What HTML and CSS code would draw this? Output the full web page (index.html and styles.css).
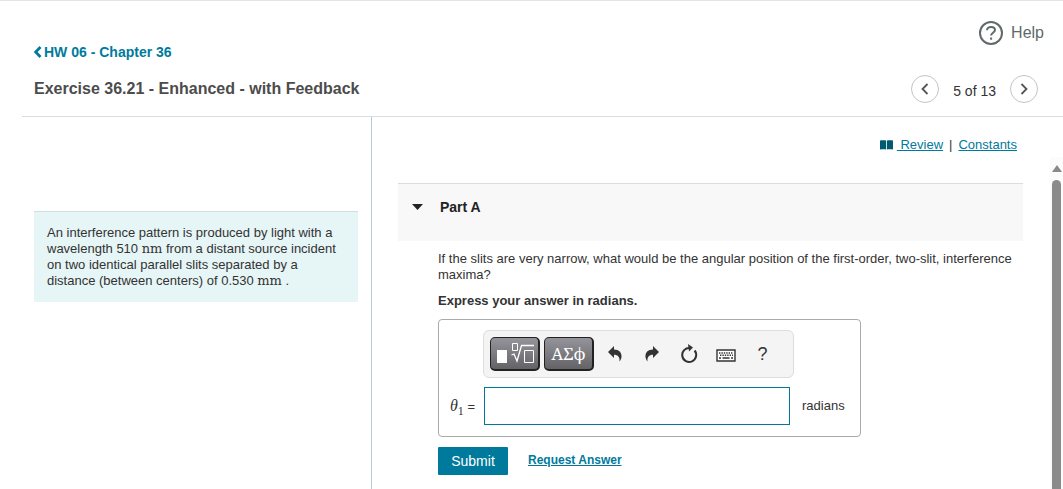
FILE: index.html
```html
<!DOCTYPE html>
<html lang="en">
<head>
    <meta charset="UTF-8">
    <meta name="viewport" content="width=device-width, initial-scale=1.0">
    <title>Exercise 36.21 - Enhanced - with Feedback</title>
    <link rel="stylesheet" href="styles.css">
</head>
<body>
    <header class="header">
        <div class="titles">
            <a class="back" href="#">
                <svg width="8" height="12" viewBox="0 0 8 12"><path d="M6.500 1 1.600 6l4.900 5" fill="none" stroke="currentColor" stroke-width="2.800"/></svg>HW 06 - Chapter 36
            </a>
            <h1>Exercise 36.21 - Enhanced - with Feedback</h1>
        </div>
        <div class="tools">
            <a class="help" href="#">
                <svg width="24" height="24" viewBox="0 0 24 24" fill="none" stroke="currentColor"><circle cx="12" cy="12" r="11" stroke-width="2"/><path d="M8 9.300C8 7.100 9.700 5.900 12 5.900s4 1.200 4 3.200c0 2.600-3.900 2.800-3.900 5.500" stroke-width="2"/><path d="M12.100 16.500v2.200" stroke-width="2"/></svg>
                Help
            </a>
            <nav class="pager">
                <button class="round" aria-label="Previous item">
                    <svg width="8" height="12" viewBox="0 0 8 12"><path d="M6.500 1 1.500 6l5 5" fill="none" stroke="currentColor" stroke-width="1.800"/></svg>
                </button>
                <span>5 of 13</span>
                <button class="round" aria-label="Next item">
                    <svg width="8" height="12" viewBox="0 0 8 12"><path d="m1.500 1 5 5-5 5" fill="none" stroke="currentColor" stroke-width="1.800"/></svg>
                </button>
            </nav>
        </div>
    </header>

    <main class="content">
        <aside class="side">
            <p class="intro">An interference pattern is produced by light with a wavelength 510 <span class="unit">nm</span> from a distant source incident on two identical parallel slits separated by a distance (between centers) of 0.530 <span class="unit">mm</span> .</p>
        </aside>
        <section class="work">
            <div class="resources">
                <svg width="13" height="10" viewBox="0 0 13 10"><path d="M0 .6C2 0 4.500 0 6.100.6v9C4.500 9 2 9 0 9.600zM6.900.6C8.500 0 11 0 13 .6v9c-2-.6-4.500-.6-6.100 0z" fill="#005a70"/></svg>
                <a class="review" href="#">&nbsp;Review</a>
                <span class="bar">|</span>
                <a href="#">Constants</a>
            </div>
            <div class="scroll">
                <div class="part">
                    <button class="part-head">
                        <svg width="12" height="6" viewBox="0 0 12 6"><path d="M0 0h11L5.500 6z" fill="#222"/></svg>
                        Part A
                    </button>
                    <div class="part-body">
                        <p>If the slits are very narrow, what would be the angular position of the first-order, two-slit, interference maxima?</p>
                        <p class="instructions">Express your answer in radians.</p>
                        <div class="answer">
                            <div class="toolbar">
                                <button class="key" aria-label="Templates">
                                    <svg width="38" height="24" viewBox="0 0 38 24"><path d="M1 8h10v13H1z" fill="#fff"/><g fill="none" stroke="#fff"><path d="M16.500 1.500h5v7h-5z"/><path d="m15.500 13 2.500-1 3 7 4.500-15.500h12.500" stroke-width="1.300"/><path d="M28.500 8.500h9v12h-9z"/></g></svg>
                                </button>
                                <button class="key greek">ΑΣϕ</button>
                                <button class="icon" aria-label="Undo">
                                    <svg width="14" height="16" viewBox="0 0 14 16"><path d="M0 6 6 0v3.500c5 0 8 3 7.500 7.500-.2 1.500-.8 3-2 4.500C12 11 10 8.700 6 8.700V12z" fill="#333"/></svg>
                                </button>
                                <button class="icon" aria-label="Redo">
                                    <svg width="14" height="16" viewBox="0 0 14 16"><path d="M14 6 8 0v3.500C3 3.500 0 6.500.5 11c.2 1.500.8 3 2 4.500C2 11 4 8.700 8 8.700V12z" fill="#333"/></svg>
                                </button>
                                <button class="icon" aria-label="Reset">
                                    <svg width="18" height="20" viewBox="0 0 18 20"><path d="M10 4A7 7 0 1 0 14.600 6.500" fill="none" stroke="#333" stroke-width="2"/><path d="M8 0l5 3.500-4 4z" fill="#333"/></svg>
                                </button>
                                <button class="icon" aria-label="Keyboard shortcuts">
                                    <svg width="20" height="16" viewBox="0 0 20 16"><path d="M1 4h18v11H1z" fill="#fff" stroke="#333" stroke-width="1.400"/><path d="M3 7h14M4 9.300h13" stroke="#333" stroke-width="1.400" stroke-dasharray="1.400 1"/><path d="M3 12h2m1.500 0h7m1.500 0h2" stroke="#333" stroke-width="1.500"/></svg>
                                </button>
                                <button class="icon question" aria-label="Help">?</button>
                            </div>
                            <div class="entry">
                                <label for="theta"><i>θ</i><sub>1</sub> =</label>
                                <input type="text" id="theta">
                                <span>radians</span>
                            </div>
                        </div>
                        <div class="actions">
                            <button class="submit">Submit</button>
                            <a href="#">Request Answer</a>
                        </div>
                    </div>
                </div>
                <div class="scrollbar"><div class="thumb"></div></div>
            </div>
        </section>
    </main>
</body>
</html>
```

FILE: styles.css
```css
* {
    box-sizing: border-box;
}
body {
    margin: 0;
    min-height: 100vh;
    display: flex;
    flex-direction: column;
    border-top: 1px solid #e5e5e5;
    font-family: "Liberation Sans", Arial, sans-serif;
    font-size: 13px;
    line-height: 16px;
    color: #333;
    background: white;
}
h1, p {
    margin: 0;
}
button {
    font-family: inherit;
    padding: 0;
    border: none;
    background: none;
    cursor: pointer;
}
a {
    color: #007a9c;
}
.header {
    display: flex;
    justify-content: space-between;
    margin-left: 22px;
    padding: 20px 19px 13px 12px;
    border-bottom: 1px solid #ddd;
}
.titles {
    padding-top: 23px;
}
.back {
    display: flex;
    align-items: center;
    gap: 2px;
    font-size: 14px;
    font-weight: bold;
    text-decoration: none;
}
h1 {
    margin-top: 19px;
    font-size: 16px;
    line-height: 20px;
    color: #4c4c4c;
}
.tools {
    display: flex;
    flex-direction: column;
    align-items: flex-end;
    gap: 30px;
}
.help {
    display: flex;
    align-items: center;
    gap: 8px;
    font-size: 16px;
    color: #606a6a;
    text-decoration: none;
}
.pager {
    display: flex;
    align-items: center;
    gap: 14px;
    padding-right: 6px;
    font-size: 14px;
}
.pager span {
    padding-top: 4px;
}
.round {
    display: flex;
    align-items: center;
    justify-content: center;
    width: 28px;
    height: 28px;
    border: 1px solid #c4c4c4;
    border-radius: 50%;
    color: #555;
}

/* Two panes */
.content {
    flex: 1;
    display: flex;
    margin-left: 22px;
}
.side {
    flex: 0 0 350px;
    padding: 94px 13px 0 12px;
    border-right: 1px solid #b8c8d8;
}
.intro {
    padding: 13px 12px 13px 13px;
    border-top: 1px solid #cfdfe3;
    background: #e6f5f6;
}
.unit {
    font-family: "DejaVu Serif", serif;
}
.work {
    flex: 1;
    display: flex;
    flex-direction: column;
}
.resources {
    display: flex;
    justify-content: flex-end;
    align-items: center;
    gap: 6px;
    height: 40px;
    padding: 15px 46px 0 0;
}
.resources svg {
    margin-right: -2px;
}
.scroll {
    flex: 1;
    display: flex;
    justify-content: space-between;
}
.part {
    flex: 1;
    padding: 26px 27px 0 26px;
}
.part-head {
    display: flex;
    align-items: flex-start;
    gap: 16px;
    width: 100%;
    height: 58px;
    padding: 15px 14px;
    border-top: 1px solid #ddd;
    background: #f8f8f8;
    font-size: 14px;
    font-weight: bold;
    line-height: 16px;
    color: #222;
}
.part-head svg {
    margin-top: 5px;
}
.part-body {
    padding: 10px 0 14px 40px;
}
.instructions {
    margin-top: 10px;
    font-weight: bold;
}
.answer {
    width: 423px;
    max-width: 100%;
    margin-top: 10px;
    padding: 10px 11px 11px;
    border: 1px solid #aaa;
    border-radius: 4px;
}
.toolbar {
    display: flex;
    align-items: center;
    gap: 4px;
    width: 311px;
    height: 48px;
    margin-left: 33px;
    padding: 0 6px;
    border: 1px solid #ddd;
    border-radius: 6px;
    background: #f4f4f4;
}
.key {
    display: flex;
    align-items: center;
    justify-content: center;
    width: 50px;
    height: 34px;
    border: 1px solid #222;
    border-right-width: 2px;
    border-bottom-width: 2px;
    border-radius: 5px;
    background: linear-gradient(#95949b, #636366);
    color: white;
}
.greek {
    font-family: "Noto Serif", "DejaVu Serif", serif;
    font-size: 17px;
}
.icon {
    display: flex;
    align-items: center;
    justify-content: center;
    width: 33px;
    height: 34px;
    color: #333;
}
.question {
    font-size: 18px;
}
.entry {
    display: flex;
    align-items: center;
    margin-top: 9px;
}
.entry label {
    width: 34px;
    white-space: nowrap;
}
.entry i {
    font-family: "Liberation Serif", serif;
    font-size: 16px;
}
.entry sub {
    font-family: "Liberation Serif", serif;
    font-size: 12px;
    line-height: 0;
}
.entry input {
    flex: 1;
    min-width: 0;
    height: 38px;
    border: 1px solid #007a9c;
    font-size: 16px;
}
.entry span {
    width: 59px;
    padding-left: 12px;
}
.actions {
    display: flex;
    align-items: center;
    gap: 20px;
    margin-top: 10px;
}
.actions a {
    margin-bottom: 2px;
    font-size: 12px;
    font-weight: bold;
}
.submit {
    width: 70px;
    height: 28px;
    border-radius: 1px;
    background: #007a9c;
    color: white;
    font-size: 14px;
}
.scrollbar {
    width: 13px;
    padding: 8px 2px 0;
    background: #fcfcfc;
}
.scrollbar::before {
    content: "";
    display: block;
    margin-bottom: 8px;
    border: 5px solid transparent;
    border-top: none;
    border-bottom: 7px solid #8a8a8a;
}
.thumb {
    height: calc(100% - 15px);
    border-radius: 5px 5px 0 0;
    background: #8a8a8a;
}
```
